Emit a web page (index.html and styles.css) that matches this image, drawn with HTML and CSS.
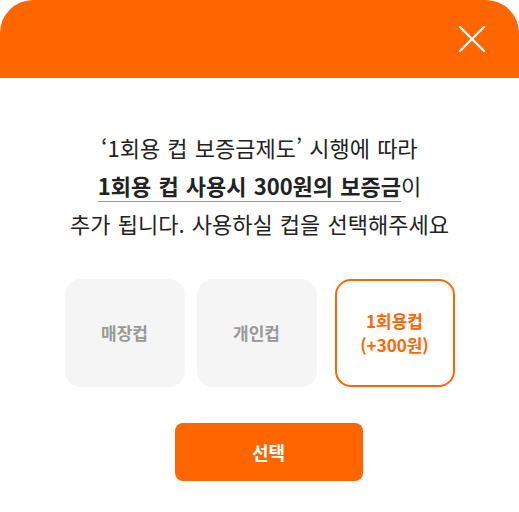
FILE: index.html
```html
<!DOCTYPE html>
<html lang="ko">
<head>
<meta charset="utf-8">
<link rel="stylesheet" href="styles.css">
</head>
<body>
<div class="modal">
  <header class="header">
    <button class="close" aria-label="닫기">
      <svg width="26" height="26" viewBox="0 0 26 26"><path d="M1 1L25 25M25 1L1 25" stroke="#fff" stroke-width="2.2" stroke-linecap="round" fill="none"/></svg>
    </button>
  </header>
  <main class="content">
    <p class="message">
      <span class="line">‘1회용 컵 보증금제도’ 시행에 따라</span>
      <span class="line"><strong class="em">1회용 컵 사용시 300원의 보증금</strong>이</span>
      <span class="line">추가 됩니다. 사용하실 컵을 선택해주세요</span>
    </p>
    <div class="options">
      <div class="option">매장컵</div>
      <div class="option">개인컵</div>
      <div class="option selected">1회용컵<br>(+300원)</div>
    </div>
    <button class="submit">선택</button>
  </main>
</div>
</body>
</html>
```
FILE: styles.css
```css
* { box-sizing: border-box; }
html, body { margin: 0; padding: 0; background: #fff; }
body { font-family: "Noto Sans CJK KR", "Noto Sans", sans-serif; color: #222; }
.modal { width: 519px; height: 512px; background: #fff; }
.header {
  height: 78px;
  background: #ff6600;
  border-radius: 33px 33px 0 0;
  display: flex;
  justify-content: flex-end;
  align-items: flex-start;
  padding: 26px 34px 0 0;
}
.close { background: none; border: 0; padding: 0; width: 26px; height: 26px; display: block; cursor: pointer; }
.close svg { display: block; }
.content { display: flex; flex-direction: column; align-items: center; padding-top: 50px; }
.message { margin: 0; text-align: center; font-size: 22px; line-height: 38px; word-spacing: 1px; }
.line { display: block; }
.em { font-weight: 700; border-bottom: 1px solid #999; line-height: 1.15; }
.options { display: flex; gap: 12px; margin-top: 37px; }
.option {
  width: 120px; height: 108px; border-radius: 16px;
  background: #f5f5f5; color: #999; font-weight: 700; font-size: 17px; line-height: 24px;
  display: flex; align-items: center; justify-content: center; text-align: center;
}
.option.selected { background: #fff; border: 2px solid #ff6600; color: #ff6600; margin-left: 6px; }
.submit {
  margin-top: 36px; margin-left: 18px; width: 188px; height: 58px; border: 0; border-radius: 8px;
  background: #ff6600; color: #fff; font-family: inherit; font-weight: 700; font-size: 18px;
}
```
